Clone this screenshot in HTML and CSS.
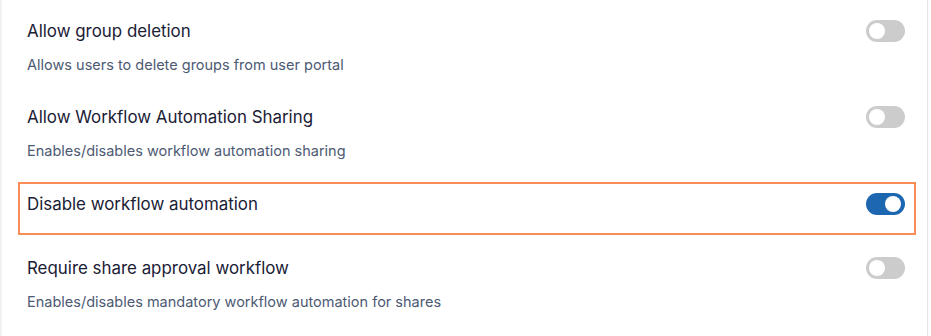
FILE: index.html
```html
<!DOCTYPE html>
<html>
<head>
<meta charset="utf-8">
<title>settings</title>
<link rel="stylesheet" href="styles.css">
</head>
<body>
    <div class="panel">
        <div class="setting">
            <div class="setting-head">
                <span class="setting-title">Allow group deletion</span>
                <span class="toggle"></span>
            </div>
            <div class="setting-desc">Allows users to delete groups from user portal</div>
        </div>
        <div class="setting">
            <div class="setting-head">
                <span class="setting-title">Allow Workflow Automation Sharing</span>
                <span class="toggle"></span>
            </div>
            <div class="setting-desc">Enables/disables workflow automation sharing</div>
        </div>
        <div class="setting highlight">
            <div class="setting-head">
                <span class="setting-title">Disable workflow automation</span>
                <span class="toggle on"></span>
            </div>
        </div>
        <div class="setting">
            <div class="setting-head">
                <span class="setting-title">Require share approval workflow</span>
                <span class="toggle"></span>
            </div>
            <div class="setting-desc">Enables/disables mandatory workflow automation for shares</div>
        </div>
    </div>
</body>
</html>
```

FILE: styles.css
```css
body {
    margin: 0;
    background: #ffffff;
    font-family: Inter, "Noto Sans", Arial, sans-serif;
}

.panel {
    width: 928px;
    height: 336px;
    border-left: 2px solid #f1f1f1;
    border-right: 1px solid #e6e6e6;
    padding: 10px 0 0 16px;
    box-sizing: border-box;
    display: flex;
    flex-direction: column;
    gap: 11px;
}

.setting {
    width: 898px;
    box-sizing: border-box;
    padding: 9px 9px 9px 7px;
    border: 2px solid transparent;
}
.setting.highlight {
    border-color: #f98d55;
    padding: 10px 9px 19px 7px;
}
.setting + .setting.highlight + .setting {
    margin-top: 1px;
}

.setting-head {
    display: flex;
    align-items: center;
    justify-content: space-between;
    height: 20px;
}
.setting-title {
    font-size: 16.9px;
    line-height: 20px;
    color: #1a2035;
}
.setting-desc {
    margin-top: 15px;
    font-size: 14.5px;
    line-height: 18px;
    color: #4d5a73;
}

.toggle {
    width: 39px;
    height: 22px;
    border-radius: 11px;
    background: #cccccc;
    position: relative;
    flex: none;
}
.toggle::after {
    content: "";
    position: absolute;
    top: 3px;
    left: 3px;
    width: 16px;
    height: 16px;
    border-radius: 50%;
    background: #ffffff;
}
.toggle.on {
    background: #1d67b0;
}
.toggle.on::after {
    left: 19px;
}
```
